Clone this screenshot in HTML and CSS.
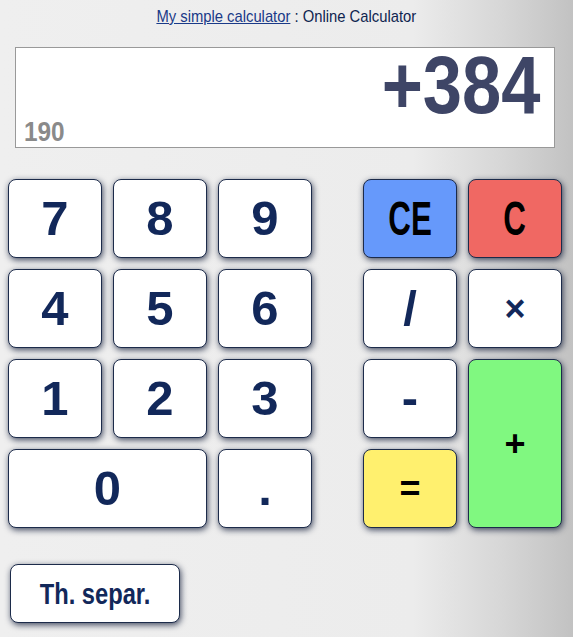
FILE: index.html
```html
<!DOCTYPE html>
<html>
<head>
<meta charset="utf-8">
<link rel="stylesheet" href="styles.css">
</head>
<body>
<div class="page">
  <p class="title"><span class="title-text"><a href="#">My simple calculator</a> : Online Calculator</span></p>
  <div class="display">
    <div class="main"><span class="main-text">+384</span></div>
    <div class="sub"><span class="sub-text">190</span></div>
  </div>
  <div class="keypad">
    <div class="nums">
      <button class="key">7</button>
      <button class="key">8</button>
      <button class="key">9</button>
      <button class="key">4</button>
      <button class="key">5</button>
      <button class="key">6</button>
      <button class="key">1</button>
      <button class="key">2</button>
      <button class="key">3</button>
      <button class="key zero">0</button>
      <button class="key">.</button>
    </div>
    <div class="ops">
      <button class="key word ce"><span class="narrow">CE</span></button>
      <button class="key word clr"><span class="narrow">C</span></button>
      <button class="key slash">/</button>
      <button class="key sym">×</button>
      <button class="key">-</button>
      <button class="key sym plus">+</button>
      <button class="key sym eq">=</button>
    </div>
  </div>
  <button class="sep"><span class="sep-text">Th. separ.</span></button>
</div>
</body>
</html>
```

FILE: styles.css
```css
html, body {
  margin: 0;
  padding: 0;
}
body {
  width: 573px;
  height: 637px;
  overflow: hidden;
  background: linear-gradient(to right, #efefef 0%, #ececec 72%, #d6d6d6 88%, #c2c2c2 100%);
  font-family: "Liberation Sans", Arial, sans-serif;
}
.page {
  display: flex;
  flex-direction: column;
  align-items: flex-start;
}
.title {
  margin: 0;
  padding-top: 7px;
  width: 100%;
  text-align: center;
  font-size: 17px;
  line-height: 20px;
  color: #0f2550;
}
.title-text {
  display: inline-block;
  transform: scaleX(0.87);
  transform-origin: center;
  white-space: nowrap;
}
.title a {
  color: #1a3a88;
  text-decoration: underline;
}
.display {
  margin: 20px 0 0 15px;
  width: 540px;
  height: 101px;
  box-sizing: border-box;
  border: 1px solid #999;
  background: #fff;
  padding: 5px 14px 0 8px;
}
.main {
  text-align: right;
  font-size: 81px;
  font-weight: bold;
  line-height: 64px;
  color: #3e4566;
}
.main-text {
  display: inline-block;
  transform: scaleX(0.87);
  transform-origin: right center;
}
.sub {
  margin-top: 1px;
  font-size: 28px;
  font-weight: bold;
  line-height: 28px;
  color: #8a8a8a;
}
.sub-text {
  display: inline-block;
  transform: scaleX(0.87);
  transform-origin: left center;
}
.keypad {
  display: flex;
  gap: 51px;
  margin: 31px 0 0 8px;
}
.nums, .ops {
  display: grid;
  grid-template-columns: repeat(3, 94px);
  grid-auto-rows: 79px;
  gap: 11px;
}
.ops {
  grid-template-columns: repeat(2, 94px);
}
.key {
  box-sizing: border-box;
  margin: 0;
  padding: 0;
  border: 1px solid #1c2b4a;
  border-radius: 8px;
  background: #fff;
  box-shadow: 1px 2px 6px rgba(10, 20, 50, 0.75);
  color: #12285a;
  font-family: "Liberation Sans", Arial, sans-serif;
  font-weight: bold;
  font-size: 49px;
  line-height: 1;
  display: flex;
  align-items: center;
  justify-content: center;
}
.zero {
  grid-column: span 2;
}
.word {
  color: #000;
}
.narrow {
  display: inline-block;
  transform: scaleX(0.64);
}
.ce {
  background: #6699fb;
}
.clr {
  background: #f06863;
}
.sym {
  font-size: 36px;
}
.plus {
  grid-row: span 2;
  background: #80f880;
  color: #000;
}
.eq {
  background: #fff06e;
  color: #000;
}
.sep {
  margin: 36px 0 0 10px;
  width: 170px;
  height: 59px;
  box-sizing: border-box;
  border: 1px solid #1c2b4a;
  border-radius: 8px;
  background: #fff;
  box-shadow: 1px 2px 6px rgba(10, 20, 50, 0.75);
  color: #12285a;
  font-family: "Liberation Sans", Arial, sans-serif;
  font-weight: bold;
  font-size: 30px;
  padding: 0;
}
.sep-text {
  display: inline-block;
  transform: scaleX(0.79);
}
```
